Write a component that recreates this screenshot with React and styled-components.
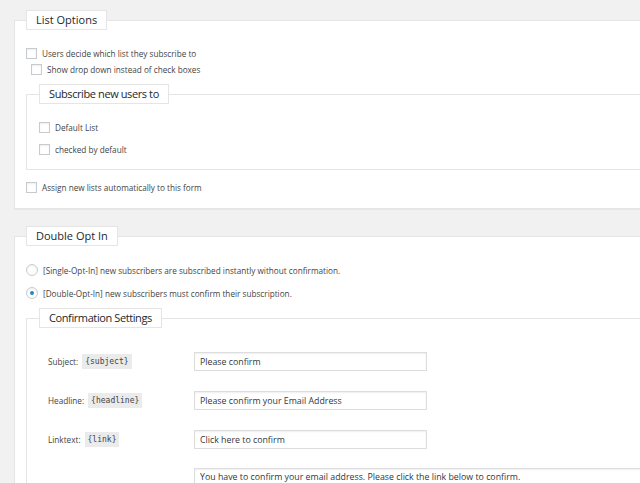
import React from "react";
import styled, { createGlobalStyle } from "styled-components";

const GlobalStyle = createGlobalStyle`
  html, body {
    margin: 0;
    padding: 0;
    background: #f1f1f1;
    overflow: hidden;
  }
  body {
    font-family: "Open Sans", "Noto Sans", sans-serif;
    color: #444;
  }
`;

const Page = styled.div`
  width: 760px;
  padding-top: 10px;
`;

const Panel = styled.fieldset`
  margin: ${props => (props.first ? "0" : "17px")} 0 0 14px;
  padding: 15px 11px 13px 11px;
  border: 1px solid #e5e5e5;
  background: #fff;
  box-shadow: 0 1px 1px rgba(0, 0, 0, 0.04);
  min-width: 0;
`;

const Group = styled.fieldset`
  margin: ${props => props.top || 7}px 0 0 0;
  padding: ${props => props.pad || "15px 12px 12px 12px"};
  border: 1px solid #e5e5e5;
  min-width: 0;
`;

const Legend = styled.legend`
  box-sizing: border-box;
  height: 20px;
  line-height: 18px;
  padding: 0 9px;
  border: 1px solid #e5e5e5;
  background: #fff;
  font-size: 11px;
  letter-spacing: ${props => props.squeeze || 0}px;
  color: #23282d;
`;

const Row = styled.div`
  display: flex;
  align-items: center;
  height: 16px;
  gap: 5px;
  font-size: 8.2px;
  margin-top: ${props => props.top || 0}px;
  margin-left: ${props => props.indent || 0}px;
`;

const Box = styled.span`
  box-sizing: border-box;
  width: 11px;
  height: 11px;
  flex: none;
  border: 1px solid #c8cbce;
  background: #fff;
  box-shadow: inset 0 1px 2px rgba(0, 0, 0, 0.07);
`;

const Radio = styled.span`
  box-sizing: border-box;
  width: 12px;
  height: 12px;
  flex: none;
  border: 1px solid #c8cbce;
  border-radius: 50%;
  background: #fff;
  display: flex;
  align-items: center;
  justify-content: center;
  box-shadow: inset 0 1px 2px rgba(0, 0, 0, 0.07);
  &::after {
    content: "";
    width: 4px;
    height: 4px;
    border-radius: 50%;
    background: #1e8cbe;
    display: ${props => (props.checked ? "block" : "none")};
  }
`;

const Field = styled.div`
  display: flex;
  align-items: ${props => (props.tall ? "flex-start" : "center")};
  margin: ${props => props.top}px 0 0 9px;
  font-size: 8.2px;
`;

const Label = styled.div`
  width: 146px;
  flex: none;
  display: flex;
  align-items: center;
  gap: 4px;
`;

const Tag = styled.code`
  font-family: "DejaVu Sans Mono", "Liberation Mono", monospace;
  font-size: 8px;
  background: #ebebeb;
  color: #444;
  padding: 3px 3px;
`;

const Input = styled.div`
  box-sizing: border-box;
  width: 233px;
  height: 19px;
  border: 1px solid #ddd;
  box-shadow: inset 0 1px 2px rgba(0, 0, 0, 0.07);
  padding: 0 5px;
  display: flex;
  align-items: center;
  color: #32373c;
  font-size: 8.8px;
  background: #fff;
`;

const TextArea = styled(Input)`
  width: 560px;
  height: 40px;
  align-items: flex-start;
  padding-top: 2px;
`;

const App = () => (
  <Page>
    <GlobalStyle />
    <Panel first>
      <Legend>List Options</Legend>
      <Row>
        <Box />
        Users decide which list they subscribe to
      </Row>
      <Row indent={5}>
        <Box />
        Show drop down instead of check boxes
      </Row>
      <Group>
        <Legend squeeze={-0.4}>Subscribe new users to</Legend>
        <Row>
          <Box />
          Default List
        </Row>
        <Row top={6}>
          <Box />
          checked by default
        </Row>
      </Group>
      <Row top={9}>
        <Box />
        Assign new lists automatically to this form
      </Row>
    </Panel>

    <Panel>
      <Legend>Double Opt In</Legend>
      <Row top={1}>
        <Radio />
        [Single-Opt-In] new subscribers are subscribed instantly without confirmation.
      </Row>
      <Row top={7}>
        <Radio checked />
        [Double-Opt-In] new subscribers must confirm their subscription.
      </Row>
      <Group top={7} pad="0 12px 40px 12px">
        <Legend squeeze={-0.4}>Confirmation Settings</Legend>
        <Field top={24}>
          <Label>
            Subject: <Tag>{"{subject}"}</Tag>
          </Label>
          <Input>Please confirm</Input>
        </Field>
        <Field top={20}>
          <Label>
            Headline: <Tag>{"{headline}"}</Tag>
          </Label>
          <Input>Please confirm your Email Address</Input>
        </Field>
        <Field top={20}>
          <Label>
            Linktext: <Tag>{"{link}"}</Tag>
          </Label>
          <Input>Click here to confirm</Input>
        </Field>
        <Field top={19} tall>
          <Label />
          <TextArea>
            You have to confirm your email address. Please click the link below to confirm.
          </TextArea>
        </Field>
      </Group>
    </Panel>
  </Page>
);

export default App;
